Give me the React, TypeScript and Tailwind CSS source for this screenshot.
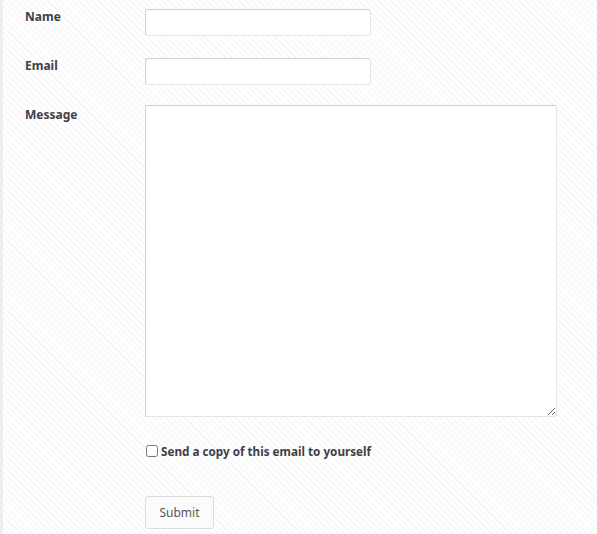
import React, { useState } from 'react';

const labelCls = "text-[12px] font-bold leading-[20px] text-[#3d4047]";
const inputCls =
  "h-[27px] rounded-[3px] border border-[#cfcfcf] border-b-[#e6e6e6] border-r-[#e6e6e6] bg-white px-2 text-[12px] outline-none";

const ContactForm = () => {
  const [name, setName] = useState('');
  const [email, setEmail] = useState('');
  const [message, setMessage] = useState('');
  const [copy, setCopy] = useState(false);

  return (
    <form
      className="flex flex-col pt-[9px] pl-[22px]"
      onSubmit={(e) => e.preventDefault()}
    >
      {/* name */}
      <div className="grid grid-cols-[120px_1fr]">
        <label className={labelCls + " -mt-[2px]"}>Name</label>
        <input
          className={inputCls + " w-[226px]"}
          value={name}
          onChange={(e) => setName(e.target.value)}
        />
      </div>

      {/* email */}
      <div className="mt-[22px] grid grid-cols-[120px_1fr]">
        <label className={labelCls + " -mt-[2px]"}>Email</label>
        <input
          className={inputCls + " w-[226px]"}
          value={email}
          onChange={(e) => setEmail(e.target.value)}
        />
      </div>

      {/* message */}
      <div className="mt-[20px] grid grid-cols-[120px_1fr]">
        <label className={labelCls}>Message</label>
        <textarea
          className="h-[312px] w-[412px] rounded-[2px] border border-[#cfcfcf] border-b-[#e6e6e6] border-r-[#e6e6e6] bg-white p-2 text-[12px] outline-none"
          value={message}
          onChange={(e) => setMessage(e.target.value)}
        />
      </div>

      {/* copy */}
      <div className="mt-[24px] grid grid-cols-[120px_1fr]">
        <div />
        <label className="flex items-center gap-[3px] text-[11.7px] font-bold leading-[20px] text-[#3d4047]">
          <input
            type="checkbox"
            className="m-0 ml-[1px] h-[12px] w-[12px]"
            checked={copy}
            onChange={(e) => setCopy(e.target.checked)}
          />
          Send a copy of this email to yourself
        </label>
      </div>

      {/* submit */}
      <div className="mt-[35px] grid grid-cols-[120px_1fr]">
        <div />
        <button
          type="submit"
          className="h-[33px] w-[69px] rounded-[3px] border border-[#dcdcdc] bg-[#fbfbfc] text-[12px] text-[#555]"
        >
          Submit
        </button>
      </div>
    </form>
  );
};

const App = () => {
  return (
    <div
      className="min-h-[534px] w-full border-l-[3px] border-[#eceef2] bg-[repeating-linear-gradient(45deg,#ffffff_0px,#ffffff_3px,#f7f7f7_3px,#f7f7f7_4.5px)] font-['Noto_Sans','Open_Sans',sans-serif]"
    >
      <ContactForm />
    </div>
  );
};

export default App;
